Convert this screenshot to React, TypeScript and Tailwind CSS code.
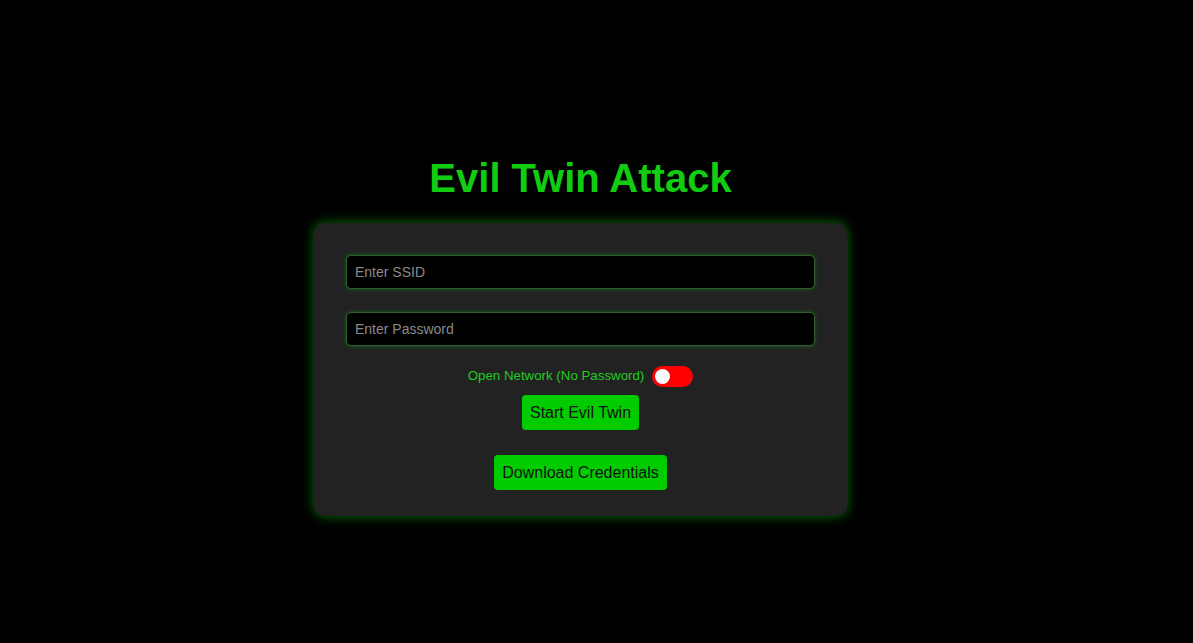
export default function App() {
  return (
    <div
      className="min-h-[643px] w-full bg-black flex flex-col items-center pt-[155px] pr-[32px]"
      style={{ fontFamily: '"Liberation Sans", Arial, sans-serif' }}
    >
      <h1 className="text-[40px] leading-[46px] font-bold text-[#11cc11]">Evil Twin Attack</h1>
      <div className="mt-[22px] w-[533px] bg-[#222222] rounded-[10px] px-[32px] pt-[32px] pb-[26px] shadow-[0_0_12px_rgba(0,255,0,0.45)] flex flex-col items-center">
        <input
          placeholder="Enter SSID"
          className="w-full h-[34px] bg-black border border-[#2f5f2f] rounded-[5px] px-[8px] text-[14px] text-white placeholder:text-[#8a8a8a] outline-none shadow-[0_0_4px_rgba(0,255,0,0.3)]"
        />
        <input
          placeholder="Enter Password"
          className="mt-[23px] w-full h-[34px] bg-black border border-[#2f5f2f] rounded-[5px] px-[8px] text-[14px] text-white placeholder:text-[#8a8a8a] outline-none shadow-[0_0_4px_rgba(0,255,0,0.3)]"
        />
        <div className="mt-[20px] h-[20px] flex items-center gap-[8px]">
          <span className="text-[13.3px] text-[#22cc22]">Open Network (No Password)</span>
          <div className="w-[41px] h-[21px] rounded-full bg-[#ff0000] flex items-center pl-[3px]">
            <div className="w-[15px] h-[15px] rounded-full bg-white" />
          </div>
        </div>
        <button className="mt-[9px] h-[35px] px-[8px] rounded-[4px] bg-[#00cc00] text-[16px] text-[#111]">
          Start Evil Twin
        </button>
        <button className="mt-[25px] h-[35px] px-[8px] rounded-[4px] bg-[#00cc00] text-[16px] text-[#111]">
          Download Credentials
        </button>
      </div>
    </div>
  );
}
